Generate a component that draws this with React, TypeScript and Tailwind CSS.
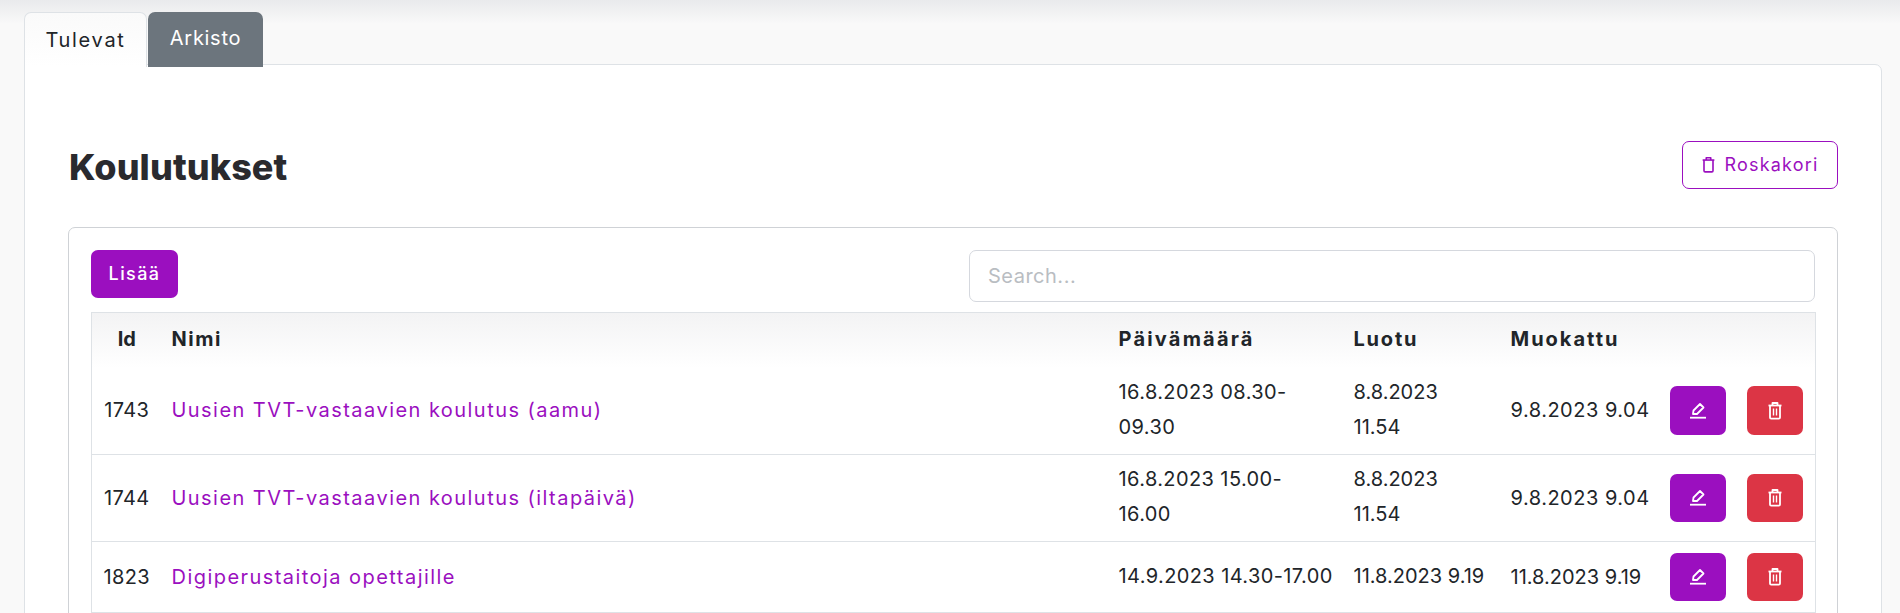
const rows = [
  { id: '1743', name: 'Uusien TVT-vastaavien koulutus (aamu)', date: ['16.8.2023 08.30-', '09.30'], created: ['8.8.2023', '11.54'], edited: '9.8.2023 9.04', h: 'h-[87px]', editedTracking: 'tracking-[0.5px]', btn: 'h-[49px]' },
  { id: '1744', name: 'Uusien TVT-vastaavien koulutus (iltapäivä)', date: ['16.8.2023 15.00-', '16.00'], created: ['8.8.2023', '11.54'], edited: '9.8.2023 9.04', h: 'h-[87px]', editedTracking: 'tracking-[0.5px]', btn: 'h-[48px]' },
  { id: '1823', name: 'Digiperustaitoja opettajille', date: ['14.9.2023 14.30-17.00'], created: ['11.8.2023 9.19'], edited: '11.8.2023 9.19', h: 'h-[71px]', editedTracking: 'tracking-normal', btn: 'h-[48px]' },
];

function PenIcon() {
  return (
    <svg viewBox="0 0 20 20" className="h-5 w-5" fill="none" stroke="currentColor" strokeWidth="1.8" strokeLinejoin="round">
      <path d="M5 13 5.5 9.5 12 3 15.5 6.5 9 13Z" />
      <path d="M2 16.7H18" />
    </svg>
  );
}

function TrashIcon({ bars = false, small = false }: { bars?: boolean; small?: boolean }) {
  return (
    <svg viewBox="0 0 16 20" className={small ? 'h-[18px] w-[15px]' : 'h-5 w-4'} fill="none" stroke="currentColor" strokeWidth="1.8" strokeLinejoin="round">
      <path d="M1.5 4.5H14.5" />
      <path d="M5.5 4.5V2H10.5V4.5" />
      <path d="M3 4.5V16.5A1.2 1.2 0 0 0 4.2 17.7H11.8A1.2 1.2 0 0 0 13 16.5V4.5" />
      {bars && <path d="M6.5 7.5V14.5M9.5 7.5V14.5" strokeWidth="1.4" />}
    </svg>
  );
}

export default function App() {
  return (
    <div className="h-[613px] overflow-hidden bg-[#f9f9f9] bg-gradient-to-b from-[#e9eaec] to-[#f9f9f9] bg-[length:100%_24px] bg-no-repeat pl-6 pr-[18px] pt-3 font-['Inter',sans-serif] text-[20px] leading-[30px] text-[#212529]">
      <div className="relative z-10 flex">
        <div className="h-[55px] w-[123px] rounded-t-[7px] border border-b-0 border-[#dee2e6] bg-gradient-to-b from-[#fafafa] to-white pt-[12px] text-center tracking-[1.7px]">Tulevat</div>
        <div className="ml-px h-[55px] w-[115px] rounded-t-[7px] bg-[#6c757d] pt-[11px] text-center tracking-[0.7px] text-white">Arkisto</div>
      </div>
      <div className="-mt-[3px] h-[600px] rounded-[7px] rounded-tl-none border border-[#dee2e6] bg-white px-[43px] pt-[76px]">
        <div className="flex h-[48px] items-center justify-between">
          <h1 className="pl-px pt-[3px] text-[36px] font-extrabold tracking-[0.1px] text-[#2a2a2e]">Koulutukset</h1>
          <button className="flex h-[48px] w-[156px] items-center justify-center gap-[8px] rounded-[7px] border border-[#9b0fbf] text-[18px] tracking-[1.2px] text-[#9b0fbf]">
            <TrashIcon small />
            Roskakori
          </button>
        </div>
        <div className="mt-[38px] h-[500px] rounded-[7px] border border-[#cfd2d6] px-[22px] pt-[22px]">
          <div className="flex items-start justify-between">
            <button className="h-[48px] w-[87px] rounded-[7px] bg-[#9b0fbf] text-[18px] font-medium tracking-[1.4px] text-white">Lisää</button>
            <input readOnly placeholder="Search..." className="h-[52px] w-[846px] rounded-[7px] border border-[#d5d8de] px-[18px] text-[20px] tracking-[0.5px] placeholder:text-[#b9bdc2]" />
          </div>
          <table className="mt-[10px] w-[1724px] table-fixed border-collapse border border-[#dee2e6] leading-[35px]">
            <colgroup>
              <col className="w-[70px]" />
              <col className="w-[947px]" />
              <col className="w-[235px]" />
              <col className="w-[157px]" />
              <col className="w-[160px]" />
              <col className="w-[77px]" />
              <col className="w-[78px]" />
            </colgroup>
            <thead>
              <tr className="h-[55px] bg-gradient-to-b from-[#f3f3f4] to-white text-left">
                <th className="pb-px text-center font-bold">Id</th>
                <th className="px-[10px] pb-px font-bold tracking-[1.5px]">Nimi</th>
                <th className="px-[10px] pb-px font-bold tracking-[2.2px]">Päivämäärä</th>
                <th className="px-[10px] pb-px font-bold tracking-[1.8px]">Luotu</th>
                <th className="px-[10px] pb-px font-bold tracking-[2px]">Muokattu</th>
                <th />
                <th />
              </tr>
            </thead>
            <tbody>
              {rows.map((row) => (
                <tr key={row.id} className={`${row.h} border-b border-[#dee2e6]`}>
                  <td className="text-center tracking-[0.3px]">{row.id}</td>
                  <td className="px-[10px] tracking-[1.45px] text-[#9b0fbf]">{row.name}</td>
                  <td className="whitespace-nowrap px-[10px] pb-[2px] tracking-[0.4px]">
                    {row.date.map((line) => (
                      <div key={line}>{line}</div>
                    ))}
                  </td>
                  <td className="whitespace-nowrap px-[10px] pb-[2px]">
                    {row.created.map((line) => (
                      <div key={line}>{line}</div>
                    ))}
                  </td>
                  <td className={`whitespace-nowrap px-[10px] ${row.editedTracking}`}>{row.edited}</td>
                  <td className="pl-[9px]">
                    <button className={`flex ${row.btn} w-[56px] items-center justify-center rounded-[7px] bg-[#9b0fbf] text-white`}>
                      <PenIcon />
                    </button>
                  </td>
                  <td className="pl-[9px]">
                    <button className={`flex ${row.btn} w-[56px] items-center justify-center rounded-[7px] bg-[#dc3545] text-white`}>
                      <TrashIcon bars />
                    </button>
                  </td>
                </tr>
              ))}
            </tbody>
          </table>
        </div>
      </div>
    </div>
  );
}
